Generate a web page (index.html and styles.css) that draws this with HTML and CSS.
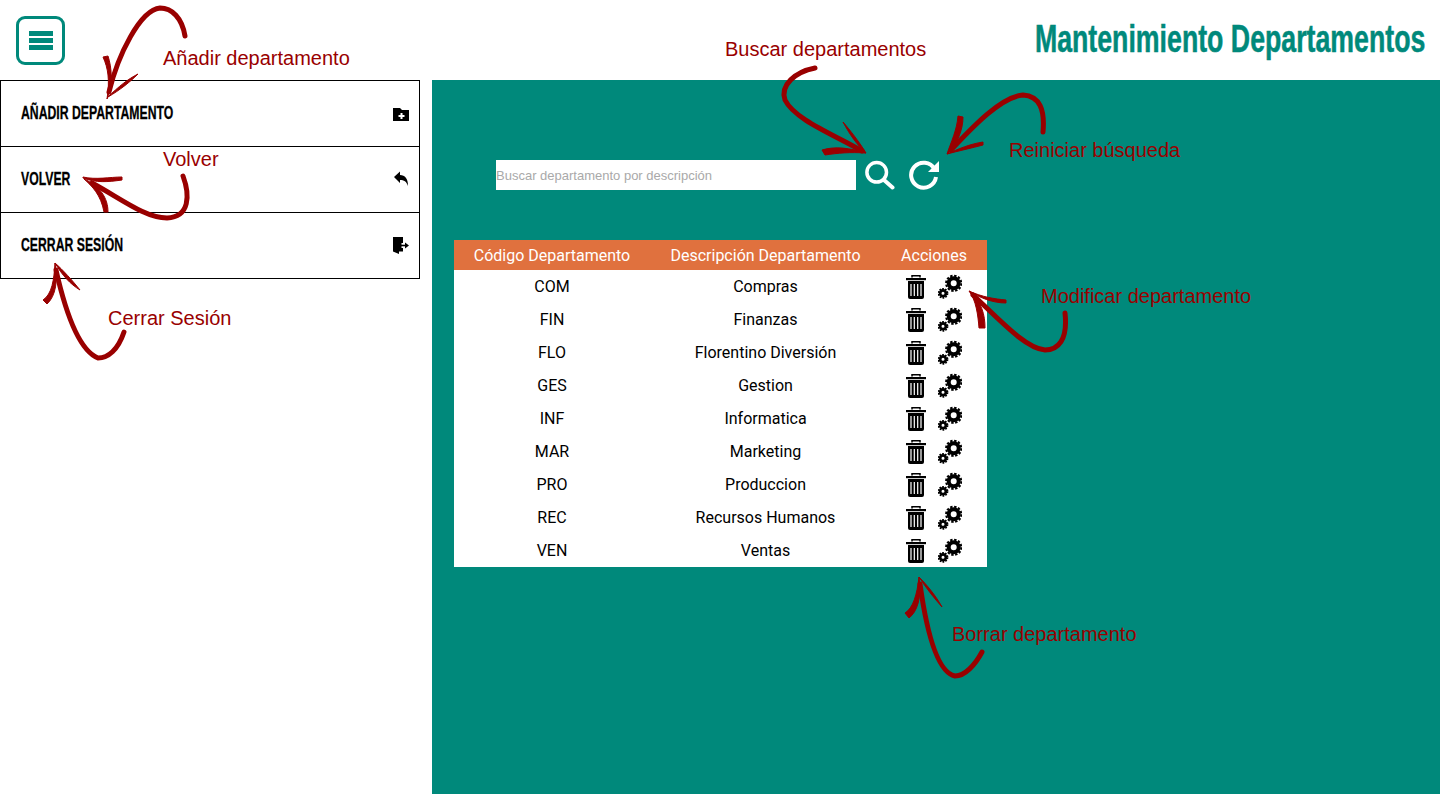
FILE: index.html
```html
<!DOCTYPE html>
<html lang="es">
<head>
<meta charset="utf-8">
<title>Mantenimiento Departamentos</title>
<link rel="stylesheet" href="styles.css">
</head>
<body>
<svg class="defs" width="0" height="0" aria-hidden="true">
  <symbol id="trash" viewBox="0 0 20 24">
    <path d="M6 2.500V.7h8v1.800" fill="none" stroke="#000" stroke-width="1.500"/>
    <rect x="0" y="3" width="20" height="2.200" fill="#000"/>
    <path d="M2 6h16v16a2 2 0 0 1-2 2H4a2 2 0 0 1-2-2z" fill="#000"/>
    <path d="M5 9v12M8.300 9v12M11.700 9v12M15 9v12" stroke="#fff" stroke-width="1.200"/>
  </symbol>
  <symbol id="gears" viewBox="0 0 24 26">
    <circle cx="15.700" cy="9.300" r="5" fill="none" stroke="#000" stroke-width="4"/>
    <circle cx="15.700" cy="9.300" r="7.600" fill="none" stroke="#000" stroke-width="2" stroke-dasharray="2.400 1.600"/>
    <circle cx="5" cy="19.300" r="2.900" fill="none" stroke="#000" stroke-width="2.800"/>
    <circle cx="5" cy="19.300" r="4.600" fill="none" stroke="#000" stroke-width="1.600" stroke-dasharray="1.700 1.200"/>
  </symbol>
</svg>

<header class="topbar">
  <button class="menu-btn" type="button" aria-label="Menú"><span></span><span></span><span></span></button>
  <h1 class="title">Mantenimiento Departamentos</h1>
</header>

<div class="layout">
  <nav class="sidebar">
    <a class="side-item">
      <span class="side-label">AÑADIR DEPARTAMENTO</span>
      <svg class="side-icon" viewBox="0 0 16 17"><path d="M0 3h7l2 2h7v11H0z" fill="#000"/><path d="M8.500 8v6M5.500 11h6" stroke="#fff" stroke-width="2"/></svg>
    </a>
    <a class="side-item">
      <span class="side-label">VOLVER</span>
      <svg class="side-icon" viewBox="0 0 16 17"><path d="M1 6 7 .5V4c5 0 8 3.500 8 11-1.500-4.500-4-6-8-6v3z" fill="#000"/></svg>
    </a>
    <a class="side-item">
      <span class="side-label">CERRAR SESIÓN</span>
      <svg class="side-icon" viewBox="0 0 16 17"><path d="M0 0h10v6H8.500v5H10v3.500H6V17L0 14.500z" fill="#000"/><path d="M8 8.500h5" stroke="#000" stroke-width="1.600"/><path d="M12 5.500 16 8.500l-4 3z" fill="#000"/></svg>
    </a>
  </nav>

  <main class="content">
    <form class="search">
      <input class="search-input" type="text" placeholder="Buscar departamento por descripción">
      <svg class="search-icon" viewBox="0 0 32 30"><circle cx="12.700" cy="12.300" r="9.800" fill="none" stroke="#fff" stroke-width="3.500"/><path d="M20 20l8.500 7.500" stroke="#fff" stroke-width="4" stroke-linecap="round"/></svg>
      <svg class="reset-icon" viewBox="0 0 32 30"><path d="M25.500 9A12.500 12.500 0 1 0 27 17" fill="none" stroke="#fff" stroke-width="4"/><path d="M30 1v11H19z" fill="#fff"/></svg>
    </form>

    <table class="grid">
      <thead>
        <tr><th class="c1">Código Departamento</th><th class="c2">Descripción Departamento</th><th class="c3">Acciones</th></tr>
      </thead>
      <tbody>
        <tr><td>COM</td><td>Compras</td><td><div class="actions"><svg class="i-trash"><use href="#trash"/></svg><svg class="i-gears"><use href="#gears"/></svg></div></td></tr>
        <tr><td>FIN</td><td>Finanzas</td><td><div class="actions"><svg class="i-trash"><use href="#trash"/></svg><svg class="i-gears"><use href="#gears"/></svg></div></td></tr>
        <tr><td>FLO</td><td>Florentino Diversión</td><td><div class="actions"><svg class="i-trash"><use href="#trash"/></svg><svg class="i-gears"><use href="#gears"/></svg></div></td></tr>
        <tr><td>GES</td><td>Gestion</td><td><div class="actions"><svg class="i-trash"><use href="#trash"/></svg><svg class="i-gears"><use href="#gears"/></svg></div></td></tr>
        <tr><td>INF</td><td>Informatica</td><td><div class="actions"><svg class="i-trash"><use href="#trash"/></svg><svg class="i-gears"><use href="#gears"/></svg></div></td></tr>
        <tr><td>MAR</td><td>Marketing</td><td><div class="actions"><svg class="i-trash"><use href="#trash"/></svg><svg class="i-gears"><use href="#gears"/></svg></div></td></tr>
        <tr><td>PRO</td><td>Produccion</td><td><div class="actions"><svg class="i-trash"><use href="#trash"/></svg><svg class="i-gears"><use href="#gears"/></svg></div></td></tr>
        <tr><td>REC</td><td>Recursos Humanos</td><td><div class="actions"><svg class="i-trash"><use href="#trash"/></svg><svg class="i-gears"><use href="#gears"/></svg></div></td></tr>
        <tr><td>VEN</td><td>Ventas</td><td><div class="actions"><svg class="i-trash"><use href="#trash"/></svg><svg class="i-gears"><use href="#gears"/></svg></div></td></tr>
      </tbody>
    </table>
  </main>
</div>

<svg class="arrows" viewBox="0 0 1440 794" aria-hidden="true">
  <g class="a-main">
    <path d="M185 36C182 18 172 8 160 8C140 10 118 55 109 92"/>
    <path d="M183 176C190 195 190 217 167 218C145 218 120 198 92 183"/>
    <path d="M124 332C118 350 108 358 98 358C78 350 65 310 56 270"/>
    <path d="M815 68C795 72 780 85 785 100C795 120 835 135 862 151"/>
    <path d="M1043 132C1045 110 1040 96 1023 95C1000 97 970 130 951 150"/>
    <path d="M1065 313C1068 340 1058 350 1045 350C1025 348 1000 320 973 295"/>
    <path d="M982 652C975 665 965 676 955 676C935 672 925 620 920 584"/>
  </g>
  <g class="a-barb">
    <path d="M103 57C108 68 110 80 107 99C113 85 112 68 108 56Z"/>
    <path d="M138 74C128 79 118 87 108 97C120 90 130 82 138 74Z"/>
    <path d="M83 177C96 180 110 177 122 177L122 180C108 182 96 183 83 178Z"/>
    <path d="M84 179C92 186 101 195 104 212L108 212C108 198 100 186 84 179Z"/>
    <path d="M55 263C54 280 52 294 43 300L47 304C56 296 58 280 55 263Z"/>
    <path d="M55 263C62 275 70 284 80 290C72 280 63 270 55 263Z"/>
    <path d="M843 122C850 135 857 145 866 153C860 143 850 130 843 122Z"/>
    <path d="M822 150C835 146 850 148 866 153C850 152 838 153 825 155Z"/>
    <path d="M958 116L963 117C963 130 957 145 947 154C951 142 957 130 958 116Z"/>
    <path d="M983 142C970 144 958 149 947 154C958 151 972 148 983 145Z"/>
    <path d="M969 291C982 297 995 299 1006 300L1006 303C993 303 980 298 969 291Z"/>
    <path d="M969 291C976 300 978 315 979 328L985 328C985 315 982 302 969 291Z"/>
    <path d="M919 577C917 595 913 608 905 613L909 618C917 612 922 598 919 577Z"/>
    <path d="M919 577C926 588 934 598 942 607C936 596 927 585 919 577Z"/>
  </g>
</svg>
<span class="note n-add">Añadir departamento</span>
<span class="note n-back">Volver</span>
<span class="note n-exit">Cerrar Sesión</span>
<span class="note n-find">Buscar departamentos</span>
<span class="note n-reset">Reiniciar búsqueda</span>
<span class="note n-edit">Modificar departamento</span>
<span class="note n-del">Borrar departamento</span>
</body>
</html>
```
FILE: styles.css
```css
* { box-sizing: border-box; }
html, body { margin: 0; height: 794px; overflow: hidden; }
body { position: relative; background: #fff; font-family: Roboto, sans-serif; display: flex; flex-direction: column; }
.defs { position: absolute; }

.topbar { height: 80px; flex: none; display: flex; justify-content: space-between; align-items: flex-start; padding: 16px 15px 0 16px; }
.menu-btn { width: 49px; height: 49px; padding: 0; border: 3px solid #00897b; border-radius: 9px; background: #fff; display: flex; flex-direction: column; align-items: center; justify-content: center; gap: 2px; }
.menu-btn span { display: block; width: 24px; height: 5px; background: #00897b; }
.title { margin: -1px 0 0; color: #00897b; font-family: "Liberation Sans", sans-serif; font-size: 38px; line-height: 48px; font-weight: 700; white-space: nowrap; transform: scaleX(.703); transform-origin: right center; -webkit-text-stroke: .5px #00897b; }

.layout { flex: 1; display: flex; gap: 12px; min-height: 0; }
.sidebar { width: 420px; flex: none; display: flex; flex-direction: column; }
.side-item { height: 67px; margin-bottom: -1px; flex: none; display: flex; align-items: center; justify-content: space-between; padding: 0 10px 0 20px; border: 1px solid #000; color: #000; font-family: "Liberation Sans", sans-serif; font-size: 19px; font-weight: 700; }
.side-label { display: inline-block; margin-top: -2px; transform: scaleX(.644); transform-origin: left center; -webkit-text-stroke: .3px #000; }
.side-icon { width: 16px; height: 17px; }

.content { flex: 1; background: #00897b; padding: 80px 0 0 22px; }
.search { display: flex; align-items: center; height: 30px; margin-left: 42px; }
.search-input { width: 360px; height: 30px; padding: 1px 1px 0 0; border: 0; border-radius: 0; background: #fff; font-family: "Liberation Sans", sans-serif; font-size: 13px; outline: none; }
.search-input::placeholder { color: #a9a9a9; opacity: 1; }
.search-icon { width: 32px; height: 30px; margin-left: 8px; }
.reset-icon { width: 32px; height: 30px; margin-left: 13px; }

.grid { margin-top: 50px; width: 533px; table-layout: fixed; border-collapse: collapse; background: #fff; color: #000; font-size: 16px; text-align: center; }
.grid th { height: 30px; padding: 0; background: #e0713e; color: #fff; font-weight: 400; }
.grid td { height: 33px; padding: 0; }
.c1 { width: 196px; }
.c2 { width: 231px; }
.c3 { width: 106px; }
.actions { display: flex; align-items: center; padding-left: 25px; gap: 12px; }
.i-trash { width: 20px; height: 24px; flex: none; }
.i-gears { width: 24px; height: 26px; flex: none; }

.arrows { position: absolute; left: 0; top: 0; width: 1440px; height: 794px; pointer-events: none; }
.a-main path { fill: none; stroke: #990000; stroke-width: 5px; stroke-linecap: round; stroke-linejoin: round; }
.a-barb path { fill: #990000; stroke: #990000; stroke-width: 1px; stroke-linejoin: round; }

.note { position: absolute; color: #990000; font-family: "Liberation Sans", sans-serif; font-size: 20px; line-height: 24px; white-space: nowrap; }
.n-add { left: 163px; top: 46px; }
.n-back { left: 163px; top: 147px; }
.n-exit { left: 108px; top: 306px; }
.n-find { left: 725px; top: 37px; }
.n-reset { left: 1009px; top: 138px; }
.n-edit { left: 1041px; top: 284px; }
.n-del { left: 952px; top: 622px; }
```
